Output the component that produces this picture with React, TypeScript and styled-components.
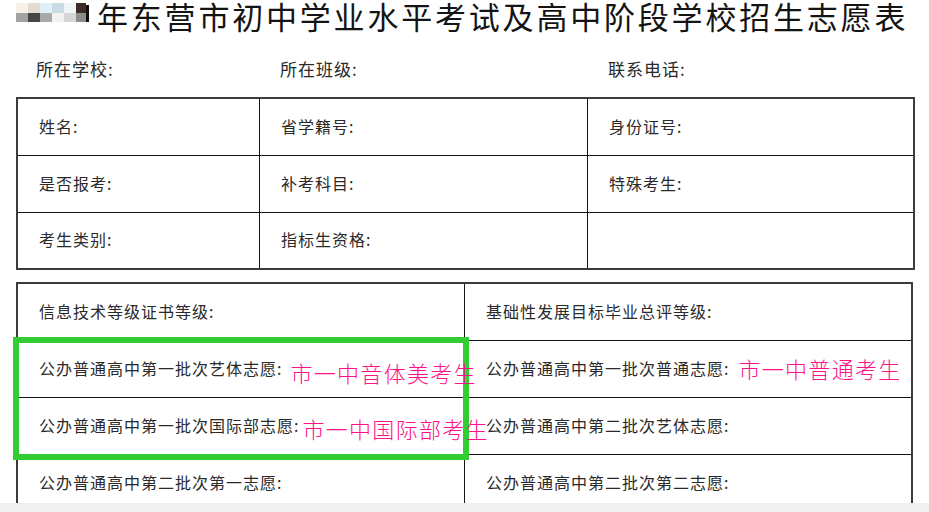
import React from "react";
import styled, { createGlobalStyle } from "styled-components";

const GlobalStyle = createGlobalStyle`
  html, body {
    margin: 0;
    padding: 0;
    background: #f0f0f0;
  }
  * { box-sizing: border-box; }
`;

const FONT = `"Noto Sans CJK SC", "Noto Sans", sans-serif`;

const Page = styled.div`
  width: 929px;
  height: 503px;
  overflow: hidden;
  background: #ffffff;
  font-family: ${FONT};
  color: #333;
`;

const TitleRow = styled.div`
  display: flex;
  align-items: flex-start;
  height: 32px;
  padding-left: 16px;
`;

const Mosaic = styled.div`
  display: grid;
  flex-shrink: 0;
  grid-template-columns: repeat(5, 12px) 10px;
  grid-template-rows: 10px 9px;
  margin-top: 3px;
`;

const Tile = styled.div<{ $c: string }>`
  background: ${(p) => p.$c};
`;

const YearStroke = styled.div`
  flex-shrink: 0;
  width: 3px;
  height: 17px;
  margin-top: 5px;
  background: #111;
  margin-right: 8px;
`;

const Title = styled.h1`
  flex-shrink: 0;
  margin: 0;
  font-family: ${FONT};
  font-weight: 400;
  font-size: 31px;
  line-height: 31px;
  letter-spacing: 2.8px;
  color: #141414;
  white-space: nowrap;
`;

const HeaderRow = styled.div`
  display: grid;
  grid-template-columns: 244px 328px 327px;
  margin-left: 16px;
  height: 65px;
  padding-top: 8px;
  align-items: center;
`;

const HeaderItem = styled.div`
  padding-left: 20px;
  font-size: 17px;
  letter-spacing: 1px;
  color: #2a2a2a;
  white-space: nowrap;
`;

const InfoTable = styled.div`
  display: grid;
  grid-template-columns: 242px 328px 1fr;
  grid-template-rows: 57px 57px 1fr;
  width: 899px;
  height: 173px;
  margin-left: 16px;
  border: 2px solid #3c3c3c;
`;

const WishTable = styled.div`
  position: relative;
  display: grid;
  grid-template-columns: 447px 1fr;
  grid-auto-rows: 57px;
  width: 897px;
  margin-left: 16px;
  margin-top: 12px;
  border: 2px solid #3c3c3c;
  border-bottom: none;
`;

const Cell = styled.div<{ $lastCol?: boolean; $lastRow?: boolean }>`
  display: flex;
  align-items: center;
  padding-left: 21px;
  padding-bottom: 3px;
  border-right: ${(p) => (p.$lastCol ? "none" : "1px solid #151515")};
  border-bottom: ${(p) => (p.$lastRow ? "none" : "1px solid #151515")};
  font-size: 16px;
  letter-spacing: 1px;
  color: #2a2a2a;
  white-space: nowrap;
  overflow: visible;
`;

const Note = styled.span<{ $drop: number; $gap: number }>`
  position: relative;
  z-index: 2;
  margin-left: ${(p) => p.$gap}px;
  margin-top: ${(p) => p.$drop * 2}px;
  font-family: ${FONT};
  font-weight: 300;
  font-size: 22px;
  letter-spacing: 1.3px;
  color: #ff1188;
  white-space: nowrap;
`;

const Highlight = styled.div`
  position: absolute;
  z-index: 1;
  left: -5px;
  top: 53px;
  width: 456px;
  height: 123px;
  border: 6px solid #33cc33;
  pointer-events: none;
`;

const mosaicColors = [
  "#f7f2e9", "#e7dbcf", "#dcf1f7", "#c8dce5", "#eef6f5", "#3a2d28",
  "#a2a2a2", "#464646", "#a9a9a9", "#f1f1f1", "#d6d6d6", "#8c8c8c",
];

const infoRows = [
  ["姓名:", "省学籍号:", "身份证号:"],
  ["是否报考:", "补考科目:", "特殊考生:"],
  ["考生类别:", "指标生资格:", ""],
];

type Wish = { label: string; note?: string; drop?: number; gap?: number };

const wishRows: Wish[][] = [
  [{ label: "信息技术等级证书等级:" }, { label: "基础性发展目标毕业总评等级:" }],
  [
    { label: "公办普通高中第一批次艺体志愿:", note: "市一中音体美考生", drop: 4, gap: 8 },
    { label: "公办普通高中第一批次普通志愿:", note: "市一中普通考生", drop: 0, gap: 9 },
  ],
  [
    { label: "公办普通高中第一批次国际部志愿:", note: "市一中国际部考生", drop: 3, gap: 3 },
    { label: "公办普通高中第二批次艺体志愿:" },
  ],
  [{ label: "公办普通高中第二批次第一志愿:" }, { label: "公办普通高中第二批次第二志愿:" }],
];

export default function App() {
  return (
    <>
      <GlobalStyle />
      <Page>
        <TitleRow>
          <Mosaic>
            {mosaicColors.map((c, i) => (
              <Tile key={i} $c={c} />
            ))}
          </Mosaic>
          <YearStroke />
          <Title>年东营市初中学业水平考试及高中阶段学校招生志愿表</Title>
        </TitleRow>

        <HeaderRow>
          <HeaderItem>所在学校:</HeaderItem>
          <HeaderItem>所在班级:</HeaderItem>
          <HeaderItem>联系电话:</HeaderItem>
        </HeaderRow>

        <InfoTable>
          {infoRows.map((row, r) =>
            row.map((text, c) => (
              <Cell key={`${r}-${c}`} $lastCol={c === 2} $lastRow={r === 2}>
                {text}
              </Cell>
            ))
          )}
        </InfoTable>

        <WishTable>
          {wishRows.map((row, r) =>
            row.map((w, c) => (
              <Cell key={`${r}-${c}`} $lastCol={c === 1}>
                <span>{w.label}</span>
                {w.note && (
                  <Note $drop={w.drop ?? 0} $gap={w.gap ?? 8}>
                    {w.note}
                  </Note>
                )}
              </Cell>
            ))
          )}
          <Highlight />
        </WishTable>
      </Page>
    </>
  );
}
